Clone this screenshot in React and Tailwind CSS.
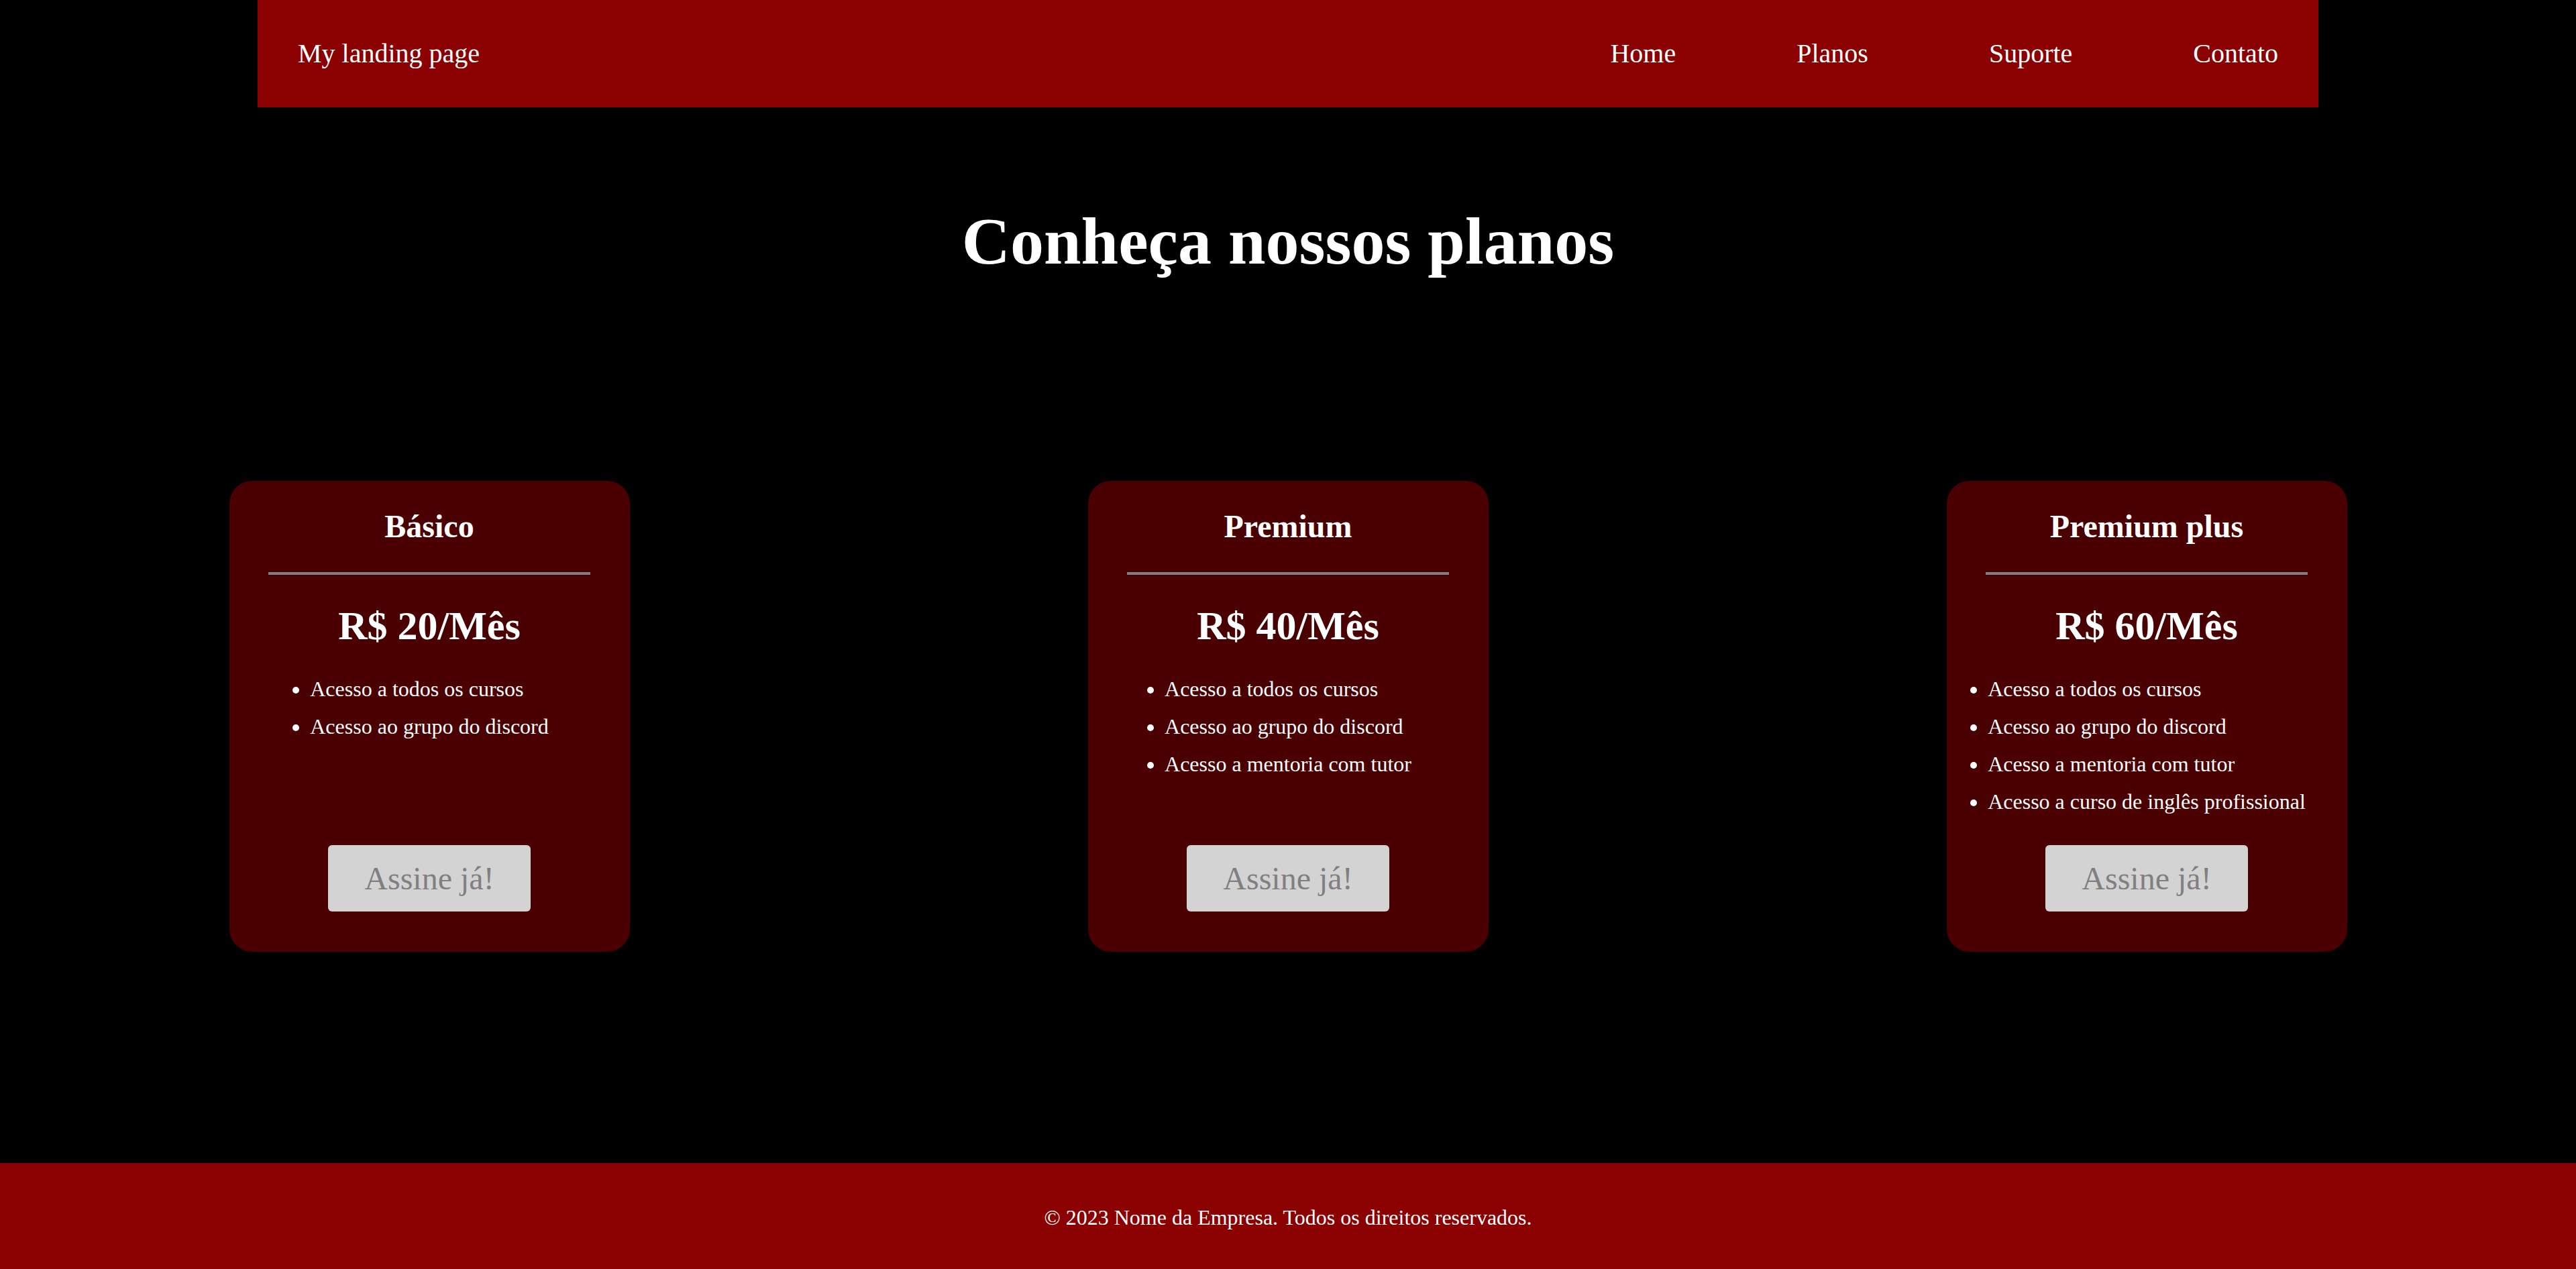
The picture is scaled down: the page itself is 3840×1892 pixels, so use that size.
import React from 'react';

const plans = [
  {
    name: 'Básico',
    price: 'R$ 20/Mês',
    features: ['Acesso a todos os cursos', 'Acesso ao grupo do discord'],
  },
  {
    name: 'Premium',
    price: 'R$ 40/Mês',
    features: ['Acesso a todos os cursos', 'Acesso ao grupo do discord', 'Acesso a mentoria com tutor'],
  },
  {
    name: 'Premium plus',
    price: 'R$ 60/Mês',
    features: [
      'Acesso a todos os cursos',
      'Acesso ao grupo do discord',
      'Acesso a mentoria com tutor',
      'Acesso a curso de inglês profissional',
    ],
  },
];

const links = ['Home', 'Planos', 'Suporte', 'Contato'];

function PlanCard({ plan }) {
  return (
    <div className="w-[597px] h-[702px] bg-[#4a0000] rounded-[34px] flex flex-col items-center pt-[40px] pb-[60px] text-white">
      <h2 className="text-[48px] leading-[56px] font-bold">{plan.name}</h2>
      <hr className="w-[480px] mt-[40px] border-0 h-[4px] bg-[#808080]" />
      <h3 className="mt-[41px] text-[60px] leading-[70px] font-bold">{plan.price}</h3>

      {/* Features */}
      <ul className="mt-[31px] w-fit mx-auto list-disc px-[40px] text-left">
        {plan.features.map((feature, i) => (
          <li key={i} className="text-[32px] leading-[56px]">
            {feature}
          </li>
        ))}
      </ul>

      <button className="mt-auto w-[302px] h-[99px] bg-[#d3d3d3] text-[#808080] text-[48px] leading-none rounded-[6px]">
        Assine já!
      </button>
    </div>
  );
}

export default function App() {
  return (
    <div className="min-h-screen bg-black flex flex-col font-['Liberation_Serif','Times_New_Roman',serif]">
      <header className="w-4/5 mx-auto h-[160px] bg-[#8b0000] flex items-center justify-between px-[60px] text-white">
        <span className="text-[40px] leading-[46px]">My landing page</span>
        <nav className="flex items-center gap-[180px]">
          {links.map((link) => (
            <a key={link} href="#" className="text-[40px] leading-[46px] text-white">
              {link}
            </a>
          ))}
        </nav>
      </header>

      <main className="flex-1">
        <h1 className="mt-[142px] text-center text-white text-[100px] leading-[115px] font-bold">
          Conheça nossos planos
        </h1>

        <div className="mt-[300px] flex justify-around">
          {plans.map((plan) => (
            <PlanCard key={plan.name} plan={plan} />
          ))}
        </div>
      </main>

      <footer className="h-[158px] bg-[#8b0000] flex items-center justify-center pt-[4px]">
        <p className="text-white text-[32px] leading-[37px]">© 2023 Nome da Empresa. Todos os direitos reservados.</p>
      </footer>
    </div>
  );
}
